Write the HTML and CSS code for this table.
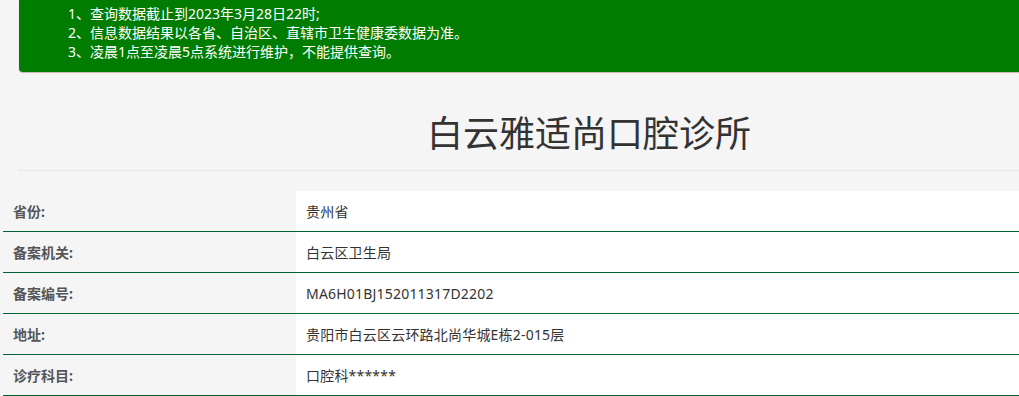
FILE: index.html
```html
<!DOCTYPE html>
<html lang="zh-CN">
<head>
<meta charset="utf-8">
<title>白云雅适尚口腔诊所</title>
<link rel="stylesheet" href="styles.css">
</head>
<body>
<div class="page">
  <div class="notice">
    <p>1、查询数据截止到2023年3月28日22时;</p>
    <p>2、信息数据结果以各省、自治区、直辖市卫生健康委数据为准。</p>
    <p>3、凌晨1点至凌晨5点系统进行维护，不能提供查询。</p>
  </div>
  <div class="head">
    <h1 class="title">白云雅适尚口腔诊所</h1>
  </div>
  <div class="info">
    <div class="row"><div class="label">省份:</div><div class="value">贵州省</div></div>
    <div class="row"><div class="label">备案机关:</div><div class="value">白云区卫生局</div></div>
    <div class="row"><div class="label">备案编号:</div><div class="value">MA6H01BJ152011317D2202</div></div>
    <div class="row"><div class="label">地址:</div><div class="value">贵阳市白云区云环路北尚华城E栋2-015层</div></div>
    <div class="row"><div class="label">诊疗科目:</div><div class="value">口腔科******</div></div>
  </div>
</div>
</body>
</html>
```

FILE: styles.css
```css
html, body {
  margin: 0;
  padding: 0;
  background: #f5f5f5;
  overflow: hidden;
}
body {
  font-family: "Noto Sans", "Noto Sans CJK SC", sans-serif;
  color: #333;
}
.page {
  width: 1019px;
}
.notice {
  margin-left: 19px;
  background: #007d00;
  color: #fff;
  padding: 4px 0 11px 49px;
  border-bottom-left-radius: 4px;
  box-shadow: 0 1px 1px rgba(150, 110, 90, 0.45);
  font-size: 14px;
  line-height: 19px;
}
.notice p {
  margin: 0;
}
.head {
  margin-left: 18px;
  border-bottom: 1px solid #e6e6e6;
  padding: 42px 0 16px 141px;
}
.title {
  margin: 0;
  text-align: center;
  font-size: 36px;
  font-weight: normal;
  line-height: 40px;
  color: #333;
}
.info {
  margin: 20px 0 0 3px;
}
.row {
  display: flex;
  height: 40px;
  border-bottom: 1px solid #006432;
}
.label {
  width: 283px;
  flex: none;
  padding-left: 10px;
  display: flex;
  align-items: center;
  font-size: 14px;
  font-weight: bold;
  color: #555;
}
.value {
  flex: 1;
  background: #fff;
  padding-left: 10px;
  display: flex;
  align-items: center;
  font-size: 14px;
  letter-spacing: 0.2px;
  color: #333;
}
```
